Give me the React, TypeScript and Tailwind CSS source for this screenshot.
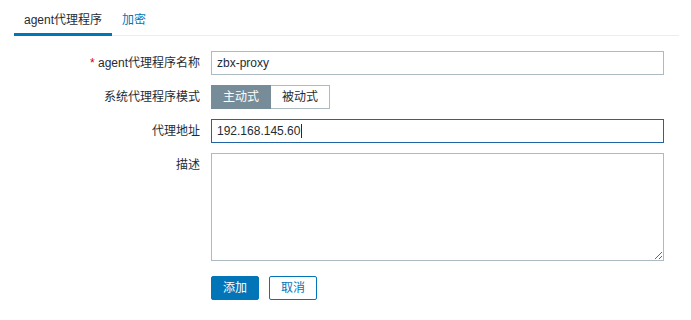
import React from "react";

const font = { fontFamily: '"Liberation Sans", Arial, "Noto Sans CJK SC", sans-serif' };

function Label({ children, required }: { children: React.ReactNode; required?: boolean }) {
  return (
    <div className="w-[200px] shrink-0 text-right leading-[24px] text-[#1f2c33]">
      {required && <span className="text-[#d40000]">* </span>}
      {children}
    </div>
  );
}

export default function App() {
  return (
    <div className="min-h-[320px] w-[691px] bg-white text-[12px]" style={font}>
      {/* tabs */}
      <div className="ml-[14px] flex w-[665px] border-b border-[#ebeef0]">
        <div className="-mb-px border-b-[3px] border-[#0275b8] px-[10px] pb-[4px] pt-[11px] leading-[18px] text-[#1f2c33]">
          agent代理程序
        </div>
        <div className="px-[10px] pb-[4px] pt-[11px] leading-[18px] text-[#0275b8]">加密</div>
      </div>

      {/* form */}
      <div className="mt-[15px] flex flex-col gap-[10px]">
        <div className="flex items-center gap-[11px]">
          <Label required>agent代理程序名称</Label>
          <div className="flex h-[24px] w-[453px] items-center border border-[#acbbc2] px-[5px] text-[#1f2c33]">
            zbx-proxy
          </div>
        </div>

        <div className="flex items-center gap-[11px]">
          <Label>系统代理程序模式</Label>
          <div className="flex h-[24px]">
            <div className="flex items-center border border-[#768d99] bg-[#768d99] px-[11px] text-white">主动式</div>
            <div className="flex items-center border-y border-r border-[#acbbc2] px-[11px] text-[#1f2c33]">被动式</div>
          </div>
        </div>

        <div className="flex items-center gap-[11px]">
          <Label>代理地址</Label>
          <div className="flex h-[24px] w-[453px] items-center border border-[#1f65a6] px-[5px] text-[#1f2c33]">
            192.168.145.60
            <span className="ml-px inline-block h-[14px] w-px bg-[#1f2c33]" />
          </div>
        </div>

        <div className="flex items-start gap-[11px]">
          <Label>描述</Label>
          <textarea
            readOnly
            className="block h-[108px] w-[453px] resize border border-[#acbbc2] bg-white px-[5px] outline-none"
          />
        </div>
      </div>

      <div className="ml-[211px] mt-[15px] flex gap-[10px]">
        <div className="flex h-[24px] w-[48px] items-center justify-center rounded-[2px] border border-[#0275b8] bg-[#0275b8] text-white">
          添加
        </div>
        <div className="flex h-[24px] w-[48px] items-center justify-center rounded-[2px] border border-[#0275b8] bg-white text-[#0275b8]">
          取消
        </div>
      </div>
    </div>
  );
}
